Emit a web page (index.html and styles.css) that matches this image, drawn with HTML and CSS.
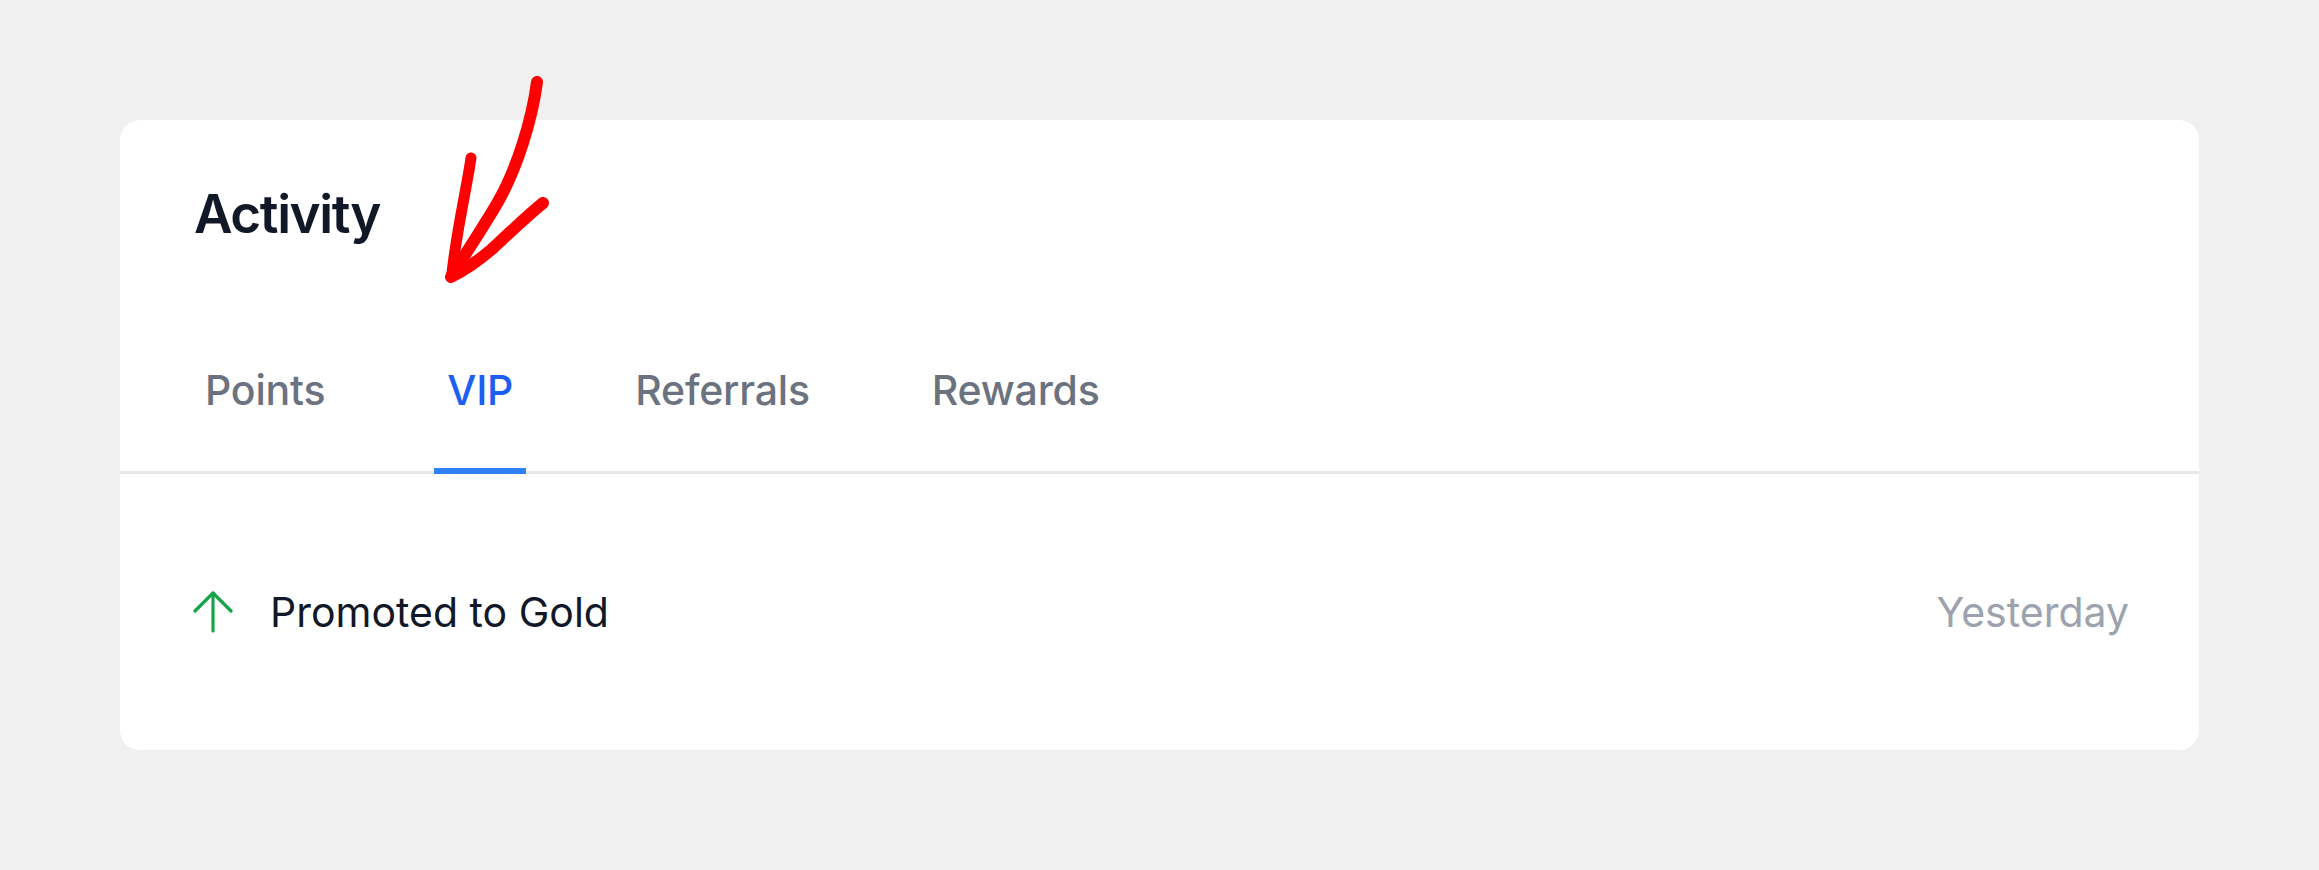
FILE: index.html
```html
<!DOCTYPE html>
<html lang="en">
<head>
<meta charset="utf-8">
<title>Activity</title>
<link rel="stylesheet" href="styles.css">
</head>
<body>
<section class="card">
  <header class="card-header">
    <h1 class="title">Activity</h1>
  </header>
  <nav class="tabs">
    <a class="tab">Points</a>
    <a class="tab tab-active">VIP</a>
    <a class="tab">Referrals</a>
    <a class="tab">Rewards</a>
  </nav>
  <div class="row">
    <svg class="row-icon" width="42" height="42" viewBox="0 0 42 42" fill="none" stroke="currentColor" stroke-width="3.2" stroke-linecap="round" stroke-linejoin="round">
      <path d="M21 40V2"/>
      <path d="M3 20L21 2L39 20"/>
    </svg>
    <span class="row-text">Promoted to Gold</span>
    <span class="row-time">Yesterday</span>
  </div>
</section>
<svg class="annotation" width="2319" height="870" viewBox="0 0 2319 870" fill="none" stroke="#ff0000" stroke-linecap="round" stroke-linejoin="round">
  <path d="M537 82 C532 120 517 168 499 200 C489 218 476 238 452 275" stroke-width="12"/>
  <path d="M471 158 C466 192 457 228 452 273" stroke-width="11"/>
  <path d="M543 203 C527 216 507 235 492 249 C477 262 463 271 451 277" stroke-width="12"/>
</svg>
</body>
</html>
```

FILE: styles.css
```css
html, body {
  margin: 0;
  padding: 0;
}

body {
  background: #f0f0f0;
  font-family: "Inter", "Liberation Sans", sans-serif;
  width: 2319px;
  height: 870px;
  overflow: hidden;
  position: relative;
}

.card {
  margin: 120px 0 0 120px;
  width: 2079px;
  background: #ffffff;
  border-radius: 20px;
  box-sizing: border-box;
}

.card-header {
  padding: 62px 74px 0;
}

.title {
  margin: 0;
  font-size: 53px;
  line-height: 64px;
  font-weight: 600;
  color: #111827;
  letter-spacing: -1.4px;
}

.tabs {
  margin-top: 119px;
  padding-left: 72px;
  display: flex;
  align-items: flex-end;
  gap: 96px;
  border-bottom: 3px solid #e5e7eb;
}

.tab {
  padding: 0 13px 53px;
  margin-bottom: -3px;
  border-bottom: 6px solid transparent;
  font-size: 41px;
  line-height: 50px;
  font-weight: 500;
  color: #6b7280;
  letter-spacing: -0.2px;
}

.tab-active {
  color: #1d5ff2;
  border-bottom-color: #2f80f5;
}

.row {
  display: flex;
  align-items: center;
  padding: 113px 70px 113px 74px;
}

.row-icon {
  color: #16a34a;
  margin-left: -2px;
  flex: none;
}

.row-text {
  margin-left: 36px;
  font-size: 41px;
  line-height: 50px;
  color: #111827;
  flex: 1;
}

.row-time {
  font-size: 41px;
  line-height: 50px;
  color: #9ca3af;
}

.annotation {
  position: absolute;
  left: 0;
  top: 0;
  pointer-events: none;
}
```
